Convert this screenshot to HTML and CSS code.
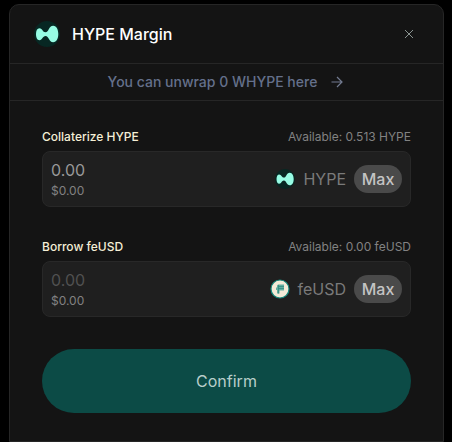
FILE: index.html
```html
<!DOCTYPE html>
<html lang="en">
<head>
  <meta charset="UTF-8">
  <meta name="viewport" content="width=device-width, initial-scale=1.0">
  <title>HYPE Margin</title>
  <link rel="stylesheet" href="styles.css">
</head>
<body>

  <!-- shared HYPE logo -->
  <svg class="sprite" aria-hidden="true">
    <symbol id="hype" viewBox="0 0 26 26">
      <circle cx="13" cy="13" r="13" fill="#072723"/>
      <path d="M2 13C2 9.500 3.200 7.200 5.500 7.200C8.500 7.200 8.500 11.200 11.500 11.200C15 11.200 14.600 4.800 19.200 4.800C22.600 4.800 24.300 9 24.300 13C24.300 17.500 22.600 21.200 19.200 21.200C14.800 21.200 15 15 11.500 15C8.700 15 8.400 19.200 5.500 19.200C3.200 19.200 2 16.500 2 13Z" fill="#97fce4"/>
    </symbol>
  </svg>

  <main class="modal">
    <header class="modal-header">
      <svg class="logo"><use href="#hype"/></svg>
      <h1>HYPE Margin</h1>
      <button type="button" class="close" aria-label="Close">
        <svg viewBox="0 0 10 10"><path d="M1 1L9 9M9 1L1 9"/></svg>
      </button>
    </header>

    <a href="#" class="unwrap">
      You can unwrap 0 WHYPE here
      <svg viewBox="0 0 12 12"><path d="M0.500 6H11M6 1L11 6L6 11"/></svg>
    </a>

    <form class="modal-body">
      <div class="field">
        <div class="field-top">
          <label for="collateral">Collaterize HYPE</label>
          <span class="available">Available: 0.513 HYPE</span>
        </div>
        <div class="box">
          <div class="amount">
            <input type="text" id="collateral" value="0.00">
            <span class="usd">$0.00</span>
          </div>
          <svg class="coin"><use href="#hype"/></svg>
          <span class="token">HYPE</span>
          <button type="button" class="max">Max</button>
        </div>
      </div>

      <div class="field">
        <div class="field-top">
          <label for="borrow">Borrow feUSD</label>
          <span class="available">Available: 0.00 feUSD</span>
        </div>
        <div class="box">
          <div class="amount">
            <input type="text" id="borrow" placeholder="0.00">
            <span class="usd">$0.00</span>
          </div>
          <svg class="coin" viewBox="0 0 20 20">
            <circle cx="10" cy="10" r="9" fill="#f3ead7" stroke="#14877c" stroke-width="1.200"/>
            <path d="M8 5.500H14V11.500H9.500V14.500H7V11H6V8.500H7V6.500Z" fill="#62ad9f"/>
            <path d="M8 7.500H14M8 9.500H14M8.500 6V14.500" fill="none" stroke="#2f8b80" stroke-width="0.800"/>
          </svg>
          <span class="token">feUSD</span>
          <button type="button" class="max">Max</button>
        </div>
      </div>

      <button type="submit" class="confirm">Confirm</button>
    </form>
  </main>

</body>
</html>
```
FILE: styles.css
```css
* {
  box-sizing: border-box;
}

body {
  margin: 0;
  padding: 4px 8px 0 9px;
  background: #000;
  font-family: Inter, sans-serif;
  font-weight: 500;
}

button, input {
  font: inherit;
  border: none;
  padding: 0;
}

button {
  cursor: pointer;
}

.sprite {
  display: none;
}

.modal {
  background: #141414;
  border: 1px solid #262626;
  border-radius: 10px 10px 0 0;
}

.modal-header {
  display: flex;
  align-items: center;
  height: 59px;
  padding: 0 24px;
  border-bottom: 1px solid #262626;
}

.logo {
  width: 26px;
  height: 26px;
}

h1 {
  flex: 1;
  margin: 0 0 0 12px;
  font-size: 16px;
  font-weight: 500;
  line-height: 24px;
  color: #fff;
}

.close {
  display: flex;
  align-items: center;
  justify-content: center;
  width: 20px;
  height: 20px;
  background: none;
}

.close svg {
  width: 10px;
  height: 10px;
  stroke: #8a9491;
  stroke-width: 1;
}

.unwrap {
  display: flex;
  align-items: center;
  justify-content: center;
  gap: 14px;
  height: 37px;
  padding-right: 2px;
  border-bottom: 1px solid #262626;
  color: #64708b;
  font-size: 14px;
  line-height: 20px;
  text-decoration: none;
}

.unwrap svg {
  width: 12px;
  height: 12px;
  fill: none;
  stroke: #737b91;
  stroke-width: 1.2;
}

.modal-body {
  padding: 26px 32px 28px;
}

.field {
  margin-bottom: 30px;
}

.field-top {
  display: flex;
  justify-content: space-between;
  margin-bottom: 4px;
  font-size: 12px;
  line-height: 20px;
}

label {
  color: #f5efd6;
}

.available {
  color: #828282;
  font-weight: 400;
}

.box {
  display: flex;
  align-items: center;
  height: 56px;
  padding: 0 8px;
  background: #1f1f1f;
  border: 1px solid #282828;
  border-radius: 8px;
}

.amount {
  flex: 1;
  min-width: 0;
  font-weight: 400;
}

.amount input {
  display: block;
  width: 100%;
  height: 24px;
  background: none;
  color: #989898;
  font-size: 16px;
  outline: none;
}

.amount input::placeholder {
  color: #505050;
  opacity: 1;
}

.usd {
  display: block;
  font-size: 12px;
  line-height: 18px;
  color: #828282;
}

.coin {
  width: 20px;
  height: 20px;
}

.token {
  margin: 0 8px;
  color: #7a7a7a;
  font-size: 16px;
  font-weight: 400;
}

.max {
  width: 48px;
  height: 28px;
  border-radius: 14px;
  background: #4a4a4a;
  color: #c4c4c4;
  font-size: 16px;
}

.confirm {
  display: block;
  width: 100%;
  height: 64px;
  margin-top: 32px;
  border-radius: 32px;
  background: #0c4b46;
  color: #b8cecb;
  font-size: 16px;
  font-weight: 400;
}
```
